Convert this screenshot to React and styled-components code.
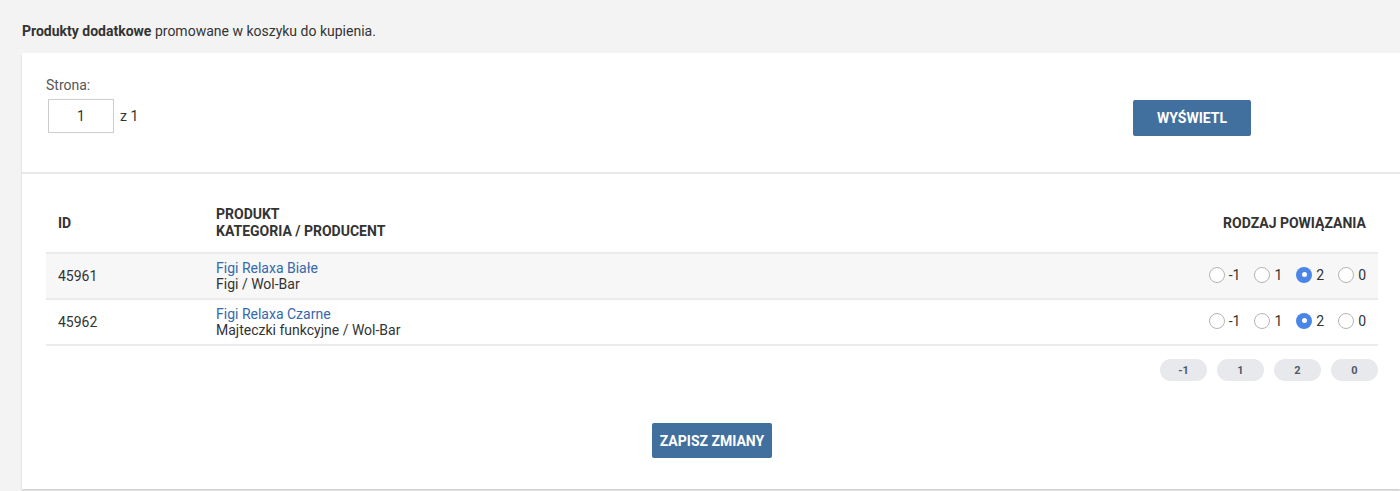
import React, { useState } from 'react';
import styled, { createGlobalStyle } from 'styled-components';

const GlobalStyle = createGlobalStyle`
  html, body {
    margin: 0;
    padding: 0;
    background: #f3f3f3;
    font-family: Roboto, "Liberation Sans", Arial, sans-serif;
    color: #333;
  }
  * { box-sizing: border-box; }
`;

const Page = styled.div`
  padding: 22px 0 0 22px;
  overflow: hidden;
`;

const Intro = styled.p`
  margin: 0 0 13px;
  font-size: 14px;
  line-height: 18px;
  color: #333;
  b { font-weight: 700; }
`;

const Card = styled.div`
  background: #fff;
  box-shadow: 0 2px 2px rgba(0, 0, 0, 0.14);
  margin-bottom: 3px;
`;

const FilterBar = styled.form`
  display: flex;
  align-items: flex-start;
  padding: 24px 149px 36px 24px;
  border-bottom: 2px solid #e8e8e8;
`;

const Field = styled.div`
  display: flex;
  flex-direction: column;
`;

const Label = styled.label`
  font-size: 14px;
  line-height: 16px;
  color: #555;
  margin-bottom: 6px;
`;

const PageRow = styled.div`
  display: flex;
  align-items: center;
  gap: 6px;
  padding-left: 2px;
  font-size: 14px;
  color: #333;
`;

const PageInput = styled.input`
  width: 66px;
  height: 34px;
  border: 1px solid #ccc;
  text-align: center;
  font: inherit;
  font-size: 14px;
  color: #333;
  outline: none;
`;

const Button = styled.button`
  height: ${p => p.$h || 36}px;
  padding: 0 ${p => p.$px || 23}px;
  border: none;
  border-radius: 2px;
  background: #41709e;
  color: #fff;
  font-family: inherit;
  font-weight: 700;
  font-size: 14px;
  text-transform: uppercase;
  cursor: pointer;
`;

const ShowButton = styled(Button)`
  margin-left: auto;
  margin-top: 23px;
  width: 118px;
  padding: 0;
`;

const TableWrap = styled.div`
  padding: 20px 22px 31px 24px;
`;

const Table = styled.table`
  width: 100%;
  border-collapse: collapse;
  font-size: 14px;
`;

const Th = styled.th`
  text-align: ${p => p.$right ? 'right' : 'left'};
  font-size: 14px;
  font-weight: 700;
  line-height: 17px;
  padding: 12px;
  color: #333;
  border-bottom: 2px solid #ebebeb;
  vertical-align: middle;
  width: ${p => p.$w || 'auto'};
`;

const Row = styled.tr`
  background: ${p => p.$odd ? '#f7f7f7' : '#fff'};
  border-bottom: 2px solid #ebebeb;
`;

const Td = styled.td`
  padding: 6px 12px;
  line-height: 16px;
  vertical-align: middle;
  text-align: ${p => p.$right ? 'right' : 'left'};
`;

const ProductLink = styled.a`
  display: block;
  color: #3568ad;
  text-decoration: none;
`;

const Radios = styled.div`
  display: inline-flex;
  align-items: center;
  gap: 14px;
`;

const RadioLabel = styled.label`
  display: inline-flex;
  align-items: center;
  gap: 4px;
  font-size: 14px;
  color: #333;
  cursor: pointer;
`;

const RadioDot = styled.span`
  width: 16px;
  height: 16px;
  border-radius: 50%;
  border: ${p => p.$on ? 'none' : '1px solid #b5b5b5'};
  background: ${p => p.$on ? '#4a86e8' : '#fff'};
  display: inline-flex;
  align-items: center;
  justify-content: center;
  &::after {
    content: '';
    display: ${p => p.$on ? 'block' : 'none'};
    width: 5px;
    height: 5px;
    border-radius: 50%;
    background: #fff;
  }
`;

const Pills = styled.div`
  display: flex;
  justify-content: flex-end;
  gap: 10px;
  margin-top: 13px;
`;

const Pill = styled.button`
  width: 47px;
  height: 22px;
  border: none;
  border-radius: 11px;
  background: #e7e9ec;
  color: #4f5a66;
  font-family: inherit;
  font-weight: 700;
  font-size: 11px;
  cursor: pointer;
`;

const Footer = styled.div`
  display: flex;
  justify-content: center;
  margin-top: 42px;
`;

const options = ['-1', '1', '2', '0'];

const products = [
  { id: 45961, name: 'Figi Relaxa Białe', category: 'Figi / Wol-Bar', rel: '2' },
  { id: 45962, name: 'Figi Relaxa Czarne', category: 'Majteczki funkcyjne / Wol-Bar', rel: '2' },
];

export default function App() {
  const [rels, setRels] = useState(products.map(p => p.rel));

  const setAll = v => setRels(rels.map(() => v));

  return (
    <Page>
      <GlobalStyle />
      <Intro><b>Produkty dodatkowe</b> promowane w koszyku do kupienia.</Intro>
      <Card>
        <FilterBar onSubmit={e => e.preventDefault()}>
          <Field>
            <Label>Strona:</Label>
            <PageRow>
              <PageInput defaultValue="1" />
              <span>z 1</span>
            </PageRow>
          </Field>
          <ShowButton type="submit">Wyświetl</ShowButton>
        </FilterBar>
        <TableWrap>
          <Table>
            <thead>
              <tr>
                <Th $w="158px">ID</Th>
                <Th>PRODUKT<br />KATEGORIA / PRODUCENT</Th>
                <Th $right>RODZAJ POWIĄZANIA</Th>
              </tr>
            </thead>
            <tbody>
              {products.map((p, i) => (
                <Row key={p.id} $odd={i % 2 === 0}>
                  <Td>{p.id}</Td>
                  <Td>
                    <ProductLink href="#">{p.name}</ProductLink>
                    {p.category}
                  </Td>
                  <Td $right>
                    <Radios>
                      {options.map(o => (
                        <RadioLabel
                          key={o}
                          onClick={() => setRels(rels.map((r, j) => (j === i ? o : r)))}
                        >
                          <RadioDot $on={rels[i] === o} />
                          {o}
                        </RadioLabel>
                      ))}
                    </Radios>
                  </Td>
                </Row>
              ))}
            </tbody>
          </Table>
          <Pills>
            {options.map(o => (
              <Pill key={o} onClick={() => setAll(o)}>{o}</Pill>
            ))}
          </Pills>
          <Footer>
            <Button $h={35} $px={8}>Zapisz zmiany</Button>
          </Footer>
        </TableWrap>
      </Card>
    </Page>
  );
}
